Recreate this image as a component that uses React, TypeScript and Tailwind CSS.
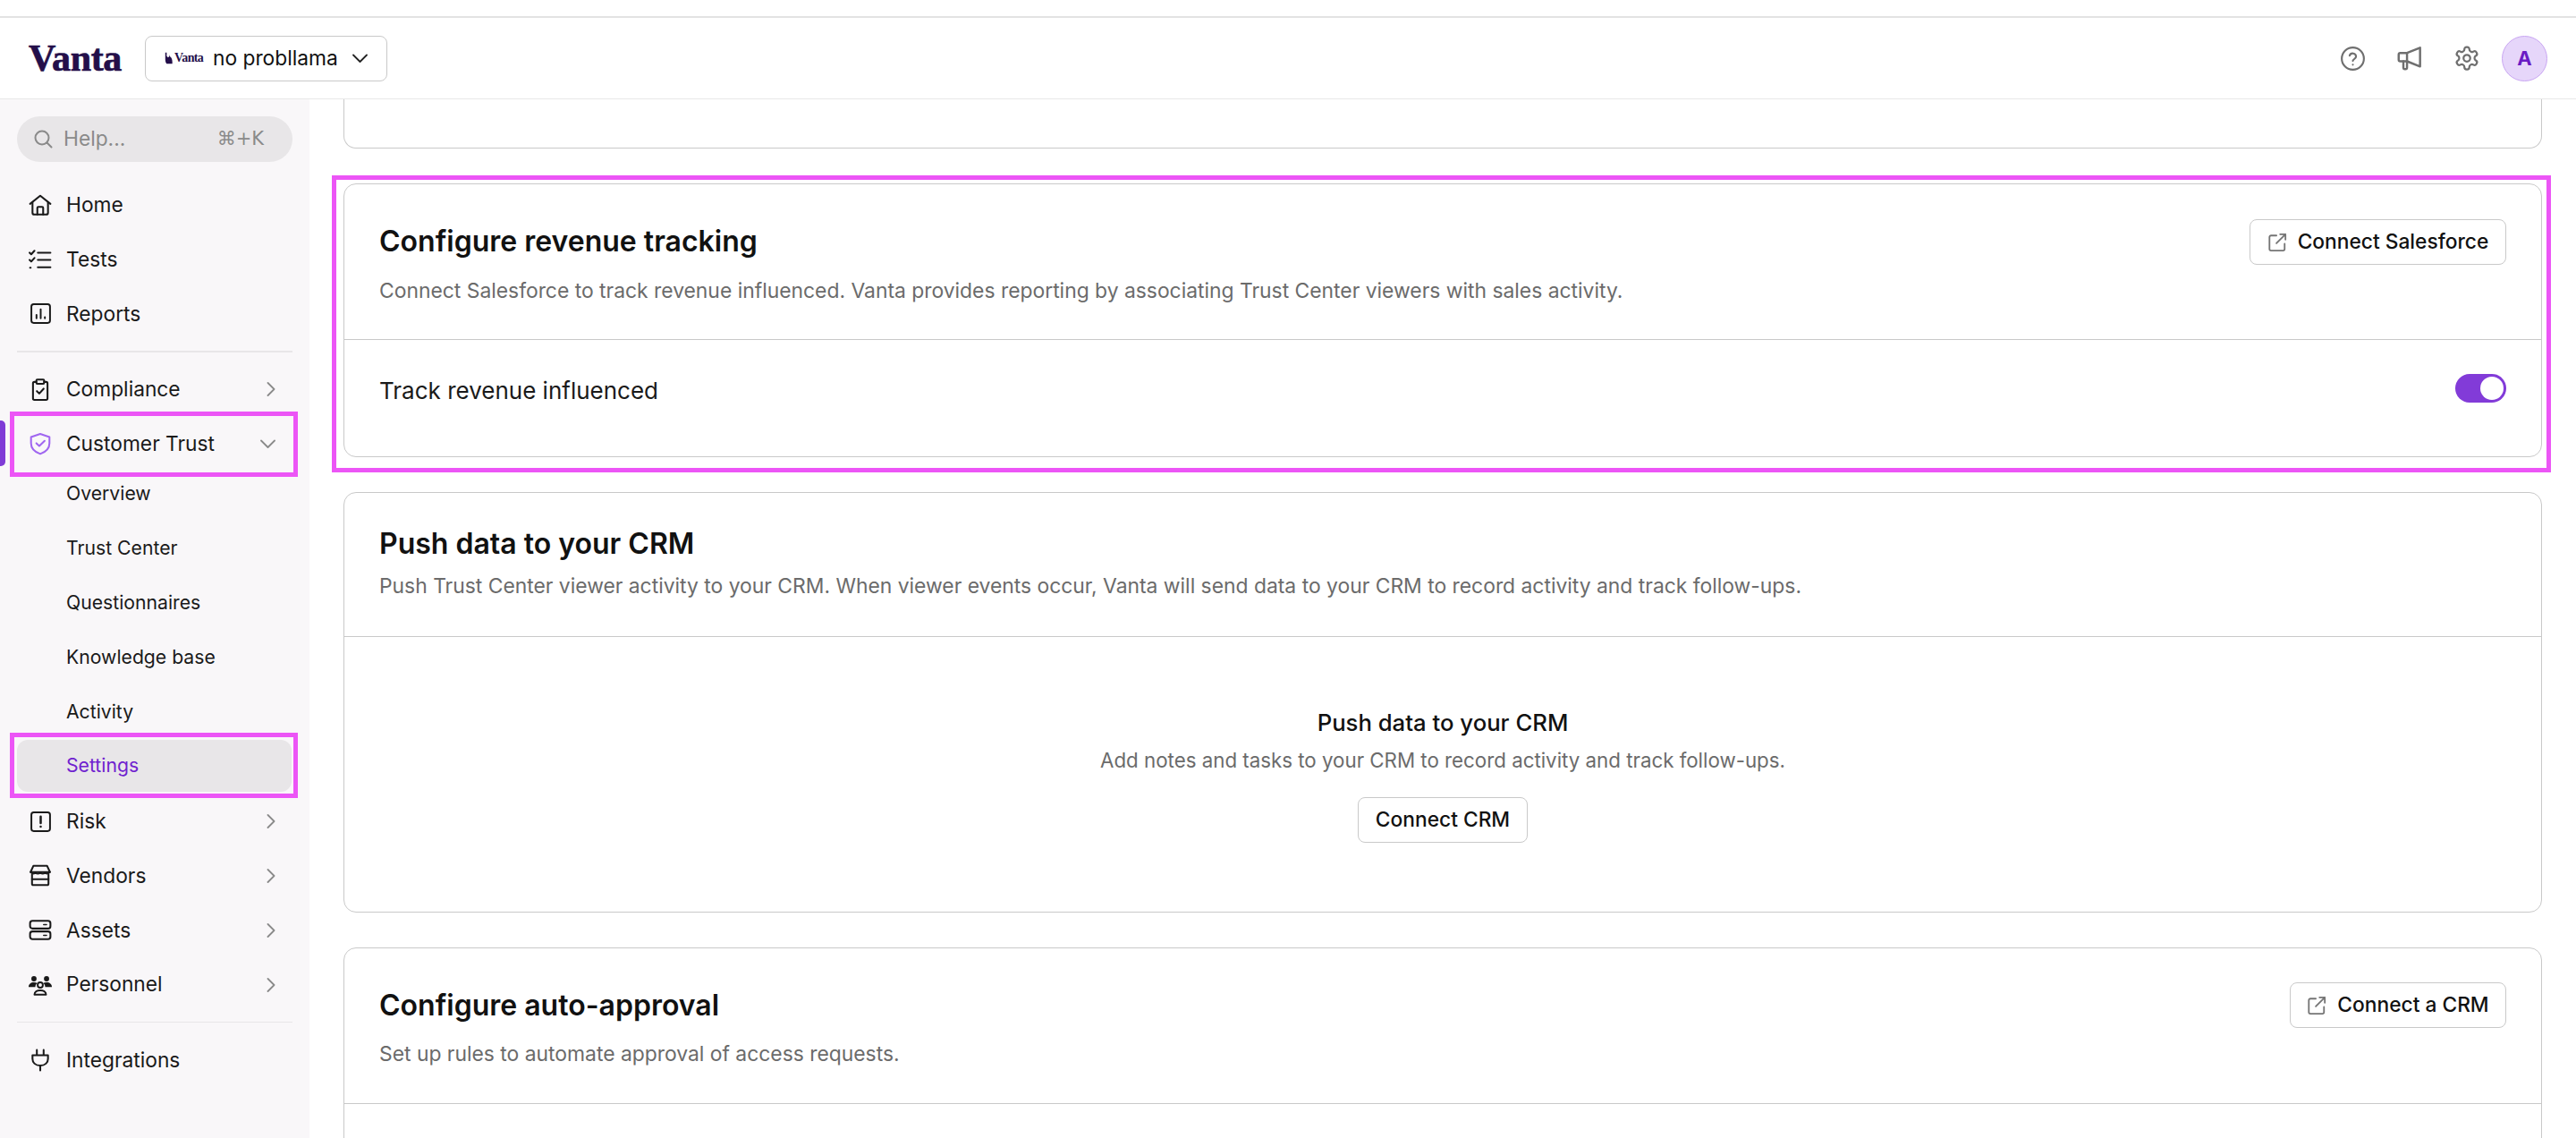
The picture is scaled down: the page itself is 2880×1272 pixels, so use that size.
import React from "react";

const Ico = ({ children, size = 26, className = "" }: { children: React.ReactNode; size?: number; className?: string }) => (
  <svg width={size} height={size} viewBox="0 0 24 24" fill="none" stroke="currentColor" strokeWidth={1.9} strokeLinecap="round" strokeLinejoin="round" className={className}>
    {children}
  </svg>
);

const Home = () => (
  <Ico><path d="M1.5 11 12 2.5 22.5 11" /><path d="M4 9.5V20a2 2 0 0 0 2 2h12a2 2 0 0 0 2-2V9.5" /><path d="M9 22v-7a1 1 0 0 1 1-1h4a1 1 0 0 1 1 1v7" /></Ico>
);
const Tests = () => (
  <Ico><path d="m1 5 1.7 1.7L6 3" /><path d="m1 12.5 1.7 1.7L6 10.5" /><path d="M1.5 20.5h.6" /><path d="M9.5 5h13M9.5 12.5h13M9.5 20h13" /></Ico>
);
const Reports = () => (
  <Ico size={25}><rect x="2" y="2" width="20" height="20" rx="2.5" /><path d="M7.5 17v-3.5M12 17V7.5M16.5 17v-1.2" /></Ico>
);
const Clip = () => (
  <Ico size={28}><path d="M8 4.5H6A1.5 1.5 0 0 0 4.500 6v15.500A1.500 1.500 0 0 0 6 23h12a1.500 1.500 0 0 0 1.500-1.500V6A1.500 1.500 0 0 0 18 4.500H16" /><rect x="8" y="2" width="8" height="4.500" rx="1" /><path d="m8.500 14 2.500 2.500 4.500-5" /></Ico>
);
const Shield = () => (
  <Ico size={28}><path d="M12 1.8 21.5 5v6.500c0 5.500-4 9-9.500 11-5.500-2-9.500-5.500-9.500-11V5z" /><path d="m8 11.500 3 2.800 5.500-5.300" /></Ico>
);
const Risk = () => (
  <Ico size={25}><rect x="2" y="2" width="20" height="20" rx="2.5" /><path d="M12 6.500v7M12 17.200v.1" strokeWidth={2.4} /></Ico>
);
const Vendors = () => (
  <Ico size={27}><path d="M5 2h14l3 6.500H2z" /><path d="M2 8.500c1.500 2 3 2 5 .8 1.700 1.200 3.300 1.200 5 0 1.700 1.200 3.300 1.200 5 0 2 1.200 3.500 1.200 5-.8" /><path d="M3.500 11v9.500A1.500 1.500 0 0 0 5 22h14a1.500 1.500 0 0 0 1.500-1.500V11" /><path d="M3.500 16h17" /></Ico>
);
const Assets = () => (
  <Ico size={27}><rect x="1.5" y="2.500" width="21" height="8" rx="2.500" /><rect x="1.500" y="13.500" width="21" height="8" rx="2.500" /><path d="M15.500 6.500h3M15.500 17.500h3" strokeWidth={1.4} /></Ico>
);
const Personnel = () => (
  <svg width="26" height="26" viewBox="0 0 24 24" fill="currentColor" stroke="none">
    <circle cx="5.500" cy="5.500" r="2.700" /><circle cx="18.500" cy="5.500" r="2.700" />
    <path d="M0 14c0-3 2.200-4.800 5.500-4.800 1.400 0 2.600.3 3.500.9-1.200.7-2 1.900-2.100 3.900zM24 14c0-3-2.200-4.800-5.500-4.800-1.400 0-2.600.3-3.500.9 1.200.7 2 1.900 2.100 3.900z" />
    <circle cx="12" cy="12" r="2.700" fill="none" stroke="currentColor" strokeWidth="1.800" />
    <path d="M6 22c0-3 2.800-4.500 6-4.500s6 1.500 6 4.500z" fill="none" stroke="currentColor" strokeWidth="1.800" strokeLinejoin="round" />
  </svg>
);
const Plug = () => (
  <Ico><path d="M8.500 1.500v5M15.500 1.500v5" /><path d="M4 7h16v3.500c0 4-3 7-8 7s-8-3-8-7z" /><path d="M12 17.500v5" /></Ico>
);
const Ext = () => (
  <svg width="22" height="22" viewBox="0 0 24 24" fill="none" stroke="#757575" strokeWidth="2" strokeLinecap="round" strokeLinejoin="round">
    <path d="M11 3.500H4.500a2 2 0 0 0-2 2V20a2 2 0 0 0 2 2H19a2 2 0 0 0 2-2v-6.500" />
    <path d="M15.500 2H22v6.500M22 2 11 13" />
  </svg>
);
const ChevR = () => (
  <svg width="10" height="16" viewBox="0 0 10 16" fill="none" stroke="#8a8a8a" strokeWidth="1.8" strokeLinecap="round" strokeLinejoin="round"><path d="m1.500 1 7 7-7 7" /></svg>
);
const ChevD = ({ color = "#8a8a8a" }: { color?: string }) => (
  <svg width="17" height="10" viewBox="0 0 17 10" fill="none" stroke={color} strokeWidth="1.8" strokeLinecap="round" strokeLinejoin="round"><path d="m1 1.500 7.500 7.500 7.500-7.500" /></svg>
);

const NavRow = ({ icon, label, chev = true }: { icon: React.ReactNode; label: string; chev?: boolean }) => (
  <div className="h-[60.8px] flex items-center pl-[32px] pr-[38px] text-[22.75px] text-[#1a1a1a]">
    <span className="w-[26px] h-[28px] flex items-center justify-center shrink-0">{icon}</span>
    <span className="ml-[16px] flex-1 whitespace-nowrap">{label}</span>
    {chev && <ChevR />}
  </div>
);

const Sub = ({ label }: { label: string }) => (
  <div className="h-[60.8px] pt-[1px] flex items-center pl-[74px] text-[21.2px] text-[#1a1a1a] whitespace-nowrap">{label}</div>
);

const Divider = () => <div className="mx-[19px] h-[1.5px] bg-[#e8e6e8] my-[11px]" />;

const Btn = ({ label, ext = true, w }: { label: string; ext?: boolean; w: string }) => (
  <div className={`h-[51px] ${w} shrink-0 flex items-center justify-center gap-[12px] border-[1.5px] border-[#c9c9c9] rounded-[8px] bg-white text-[22.75px] font-medium text-[#111111]`}>
    {ext && <Ext />}
    <span className="whitespace-nowrap">{label}</span>
  </div>
);

export default function App() {
  return (
    <div className="h-[1272px] w-[2880px] overflow-hidden bg-white flex flex-col font-['Inter',sans-serif]">
      <div className="h-[18px] shrink-0 bg-white" />
      <div className="h-[2px] shrink-0 bg-[#e3e3e3]" />
      <header className="h-[91px] shrink-0 border-b-[1.5px] border-[#e8e8e8] flex items-center pl-[32px] pr-[32px]">
        <span className="w-[130px] text-[42px] leading-none font-bold tracking-[-0.4px] text-[#240f4a] [-webkit-text-stroke:0.7px_#240f4a] font-['Liberation_Serif',serif]">Vanta</span>
        <div className="h-[51px] w-[271px] shrink-0 flex items-center border-[1.5px] border-[#c9c9c9] rounded-[8px] pl-[21px]">
          <svg width="11" height="16" viewBox="0 0 14 16" fill="#240f4a" className="shrink-0"><path d="M1 0h2v5l2 2 2-2V3l1 3c2 1 3 4 3 7v3H3c-1-1-2-3-2-6z" /></svg>
          <span className="w-[28px] text-[14px] font-bold leading-none tracking-[-0.6px] text-[#240f4a] font-['Liberation_Serif',serif] whitespace-nowrap">Vanta</span>
          <span className="ml-[15px] text-[22.75px] font-normal text-[#111111] whitespace-nowrap">no probllama</span>
          <span className="ml-[16px] flex"><ChevD color="#222222" /></span>
        </div>
        <div className="ml-auto flex items-center">
          <span className="text-[#6f6f6f] w-[64px] flex justify-center">
            <svg width="27" height="27" viewBox="0 0 24 24" fill="none" stroke="currentColor" strokeWidth="1.9" strokeLinecap="round" strokeLinejoin="round"><circle cx="12" cy="12" r="11" /><path d="M8.800 9a3.300 3.300 0 0 1 6.400 1c0 2.200-3.200 2.600-3.200 4.300" /><path d="M12 18v.1" /></svg>
          </span>
          <span className="text-[#6f6f6f] w-[64px] flex justify-center">
            <svg width="28" height="28" viewBox="0 0 24 24" fill="none" stroke="currentColor" strokeWidth="2.1" strokeLinecap="round" strokeLinejoin="round"><path d="M22 2 9.500 7H3a1.500 1.500 0 0 0-1.500 1.500v5A1.500 1.500 0 0 0 3 15h6.500L22 20z" /><path d="M6 15v6a1.500 1.500 0 0 0 1.500 1.500h.500A1.500 1.500 0 0 0 9.500 21v-6" /><path d="M9.500 7v8" /></svg>
          </span>
          <span className="text-[#6f6f6f] w-[64px] flex justify-center">
            <svg width="30" height="30" viewBox="0 0 24 24" fill="none" stroke="currentColor" strokeWidth="1.8" strokeLinecap="round" strokeLinejoin="round"><path d="M12.220 2h-.44a2 2 0 0 0-2 2v.18a2 2 0 0 1-1 1.730l-.43.250a2 2 0 0 1-2 0l-.15-.080a2 2 0 0 0-2.730.730l-.22.380a2 2 0 0 0 .730 2.730l.150.100a2 2 0 0 1 1 1.720v.510a2 2 0 0 1-1 1.740l-.15.090a2 2 0 0 0-.730 2.730l.22.380a2 2 0 0 0 2.730.730l.15-.080a2 2 0 0 1 2 0l.43.250a2 2 0 0 1 1 1.730V20a2 2 0 0 0 2 2h.44a2 2 0 0 0 2-2v-.18a2 2 0 0 1 1-1.730l.43-.250a2 2 0 0 1 2 0l.15.080a2 2 0 0 0 2.730-.730l.22-.390a2 2 0 0 0-.730-2.730l-.15-.080a2 2 0 0 1-1-1.740v-.500a2 2 0 0 1 1-1.740l.15-.090a2 2 0 0 0 .730-2.730l-.22-.380a2 2 0 0 0-2.730-.730l-.15.080a2 2 0 0 1-2 0l-.43-.250a2 2 0 0 1-1-1.730V4a2 2 0 0 0-2-2z" /><circle cx="12" cy="12" r="3" /></svg>
          </span>
          <div className="ml-[7px] w-[51px] h-[51px] rounded-full bg-[#e6d6fa] border-[1.5px] border-[#c9a6f2] flex items-center justify-center text-[22px] font-bold text-[#6a1cc4]">A</div>
        </div>
      </header>
      <div className="flex-1 flex min-h-0">
        <aside className="relative w-[346px] shrink-0 bg-[#f9f7f9] pt-[19px]">
          <div className="mx-[19px] h-[51px] rounded-full bg-[#e8e6e8] flex items-center pl-[19px] pr-[32px] text-[22.75px] text-[#8a8a8a]">
            <svg width="21" height="21" viewBox="0 0 21 21" fill="none" stroke="#8a8a8a" strokeWidth="2" strokeLinecap="round"><circle cx="9" cy="9" r="7.5" /><path d="m14.500 14.500 5 5" /></svg>
            <span className="ml-[12px]">Help...</span>
            <span className="ml-auto font-['DejaVu_Sans',sans-serif] text-[21px] whitespace-nowrap">⌘+K</span>
          </div>
          <div className="h-[18px]" />
          <NavRow icon={<Home />} label="Home" chev={false} />
          <NavRow icon={<Tests />} label="Tests" chev={false} />
          <NavRow icon={<Reports />} label="Reports" chev={false} />
          <Divider />
          <NavRow icon={<Clip />} label="Compliance" />
          <div className="relative -mb-[5px]">
            <div className="h-[60.8px] flex items-center pl-[32px] pr-[38px] text-[22.75px] text-[#1a1a1a]">
              <span className="w-[26px] h-[28px] flex items-center justify-center shrink-0 text-[#a066f0]"><Shield /></span>
              <span className="ml-[16px] flex-1 whitespace-nowrap">Customer Trust</span>
              <ChevD />
            </div>
            <div className="absolute left-0 top-[4px] w-[6px] h-[51px] rounded-r-[5px] bg-[#7f3bd6]" />
            <div className="absolute left-[11px] top-[-5.5px] w-[322px] h-[73px] border-[5px] border-[#ec55f6]" />
          </div>
          <Sub label="Overview" />
          <Sub label="Trust Center" />
          <Sub label="Questionnaires" />
          <Sub label="Knowledge base" />
          <Sub label="Activity" />
          <div className="relative h-[62.3px] flex items-start">
            <div className="mx-[19px] w-[307px] h-[58px] mt-[1.4px] rounded-[12px] bg-[#e8e6e8] flex items-center pl-[55px] text-[21.2px] text-[#6f22cf]">Settings</div>
            <div className="absolute left-[11px] top-[-6px] w-[322px] h-[73px] border-[5px] border-[#ec55f6]" />
          </div>
          <NavRow icon={<Risk />} label="Risk" />
          <NavRow icon={<Vendors />} label="Vendors" />
          <NavRow icon={<Assets />} label="Assets" />
          <NavRow icon={<Personnel />} label="Personnel" />
          <Divider />
          <NavRow icon={<Plug />} label="Integrations" chev={false} />
        </aside>
        <main className="flex-1 min-w-0 overflow-hidden px-[38px] flex flex-col gap-[39px]">
          <div className="h-[55px] shrink-0 border-[1.5px] border-t-0 border-[#c9c9c9] rounded-b-[14px]" />
          <section className="relative h-[306px] shrink-0 border-[1.5px] border-[#c9c9c9] rounded-[14px] flex flex-col">
            <div className="h-[174px] shrink-0 border-b-[1.5px] border-[#c9c9c9] pl-[39px] pr-[39px] flex justify-between">
              <div className="pt-[40px]">
                <h2 className="text-[32px] leading-[48px] font-semibold text-[#111111]">Configure revenue tracking</h2>
                <p className="mt-[14.5px] text-[22.86px] leading-[32px] text-[#6b6b6b]">Connect Salesforce to track revenue influenced. Vanta provides reporting by associating Trust Center viewers with sales activity.</p>
              </div>
              <div className="pt-[39px]"><Btn label="Connect Salesforce" w="w-[287px]" /></div>
            </div>
            <div className="flex-1 flex items-start justify-between pl-[39px] pr-[39px] pt-[38px]">
              <span className="text-[26px] leading-[36px] mt-[1px] text-[#1a1a1a]">Track revenue influenced</span>
              <div className="w-[57px] h-[32px] rounded-full bg-[#823bd8] flex items-center justify-end pr-[3px]">
                <div className="w-[26px] h-[26px] rounded-full bg-white" />
              </div>
            </div>
            <div className="absolute left-[-14.5px] top-[-10.5px] w-[2481px] h-[332px] border-[5px] border-[#ec55f6] pointer-events-none" />
          </section>
          <section className="h-[470px] shrink-0 border-[1.5px] border-[#c9c9c9] rounded-[14px] flex flex-col">
            <div className="h-[161px] shrink-0 border-b-[1.5px] border-[#c9c9c9] pl-[39px] pt-[33px]">
              <h2 className="text-[32px] leading-[48px] font-semibold text-[#111111]">Push data to your CRM</h2>
              <p className="mt-[6.5px] text-[22.86px] leading-[32px] text-[#6b6b6b]">Push Trust Center viewer activity to your CRM. When viewer events occur, Vanta will send data to your CRM to record activity and track follow-ups.</p>
            </div>
            <div className="flex-1 flex flex-col items-center pt-[78px]">
              <h3 className="text-[25.7px] leading-[36px] font-medium text-[#111111]">Push data to your CRM</h3>
              <p className="mt-[8px] text-[22.3px] leading-[32px] text-[#6b6b6b]">Add notes and tasks to your CRM to record activity and track follow-ups.</p>
              <div className="mt-[25px]"><Btn label="Connect CRM" ext={false} w="w-[190px]" /></div>
            </div>
          </section>
          <section className="h-[300px] shrink-0 border-[1.5px] border-[#c9c9c9] rounded-[14px] flex flex-col">
            <div className="h-[174px] shrink-0 border-b-[1.5px] border-[#c9c9c9] pl-[39px] pr-[39px] flex justify-between">
              <div className="pt-[40px]">
                <h2 className="text-[32px] leading-[48px] font-semibold text-[#111111]">Configure auto-approval</h2>
                <p className="mt-[13.5px] text-[22.86px] leading-[32px] text-[#6b6b6b]">Set up rules to automate approval of access requests.</p>
              </div>
              <div className="pt-[38px]"><Btn label="Connect a CRM" w="w-[242px]" /></div>
            </div>
          </section>
        </main>
      </div>
    </div>
  );
}
